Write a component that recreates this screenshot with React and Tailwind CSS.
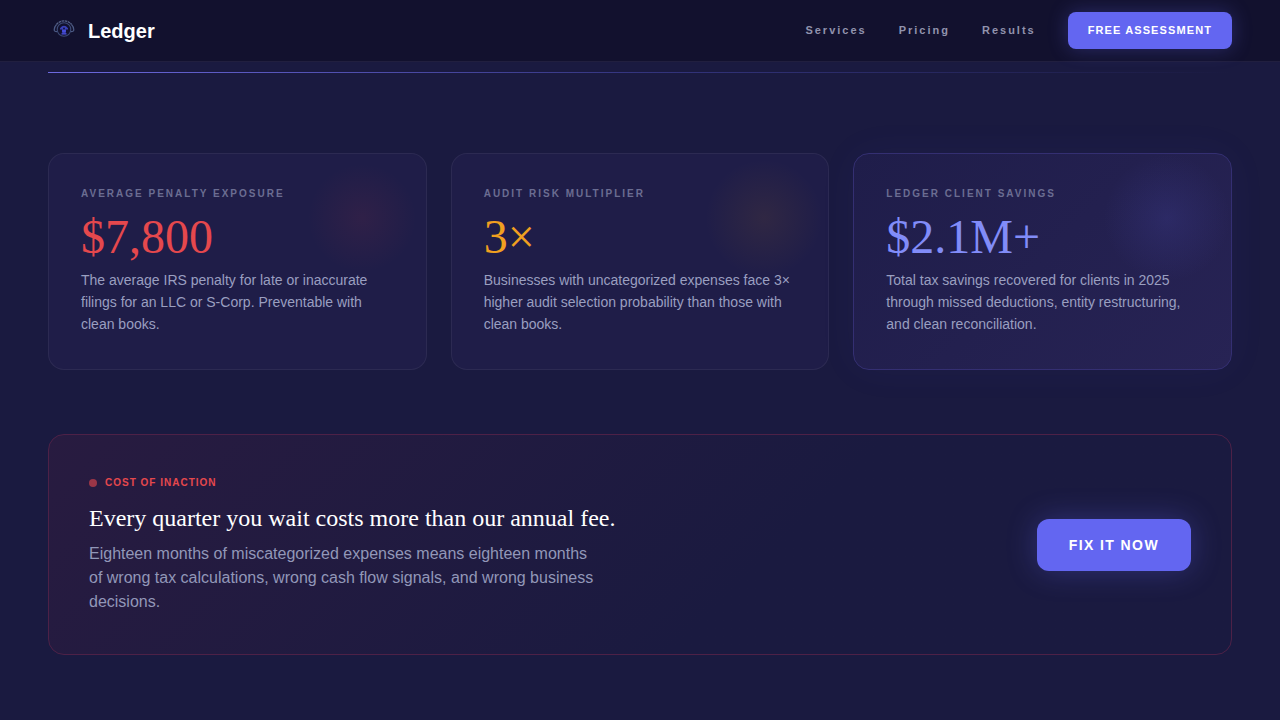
import React from 'react';

const links = ['Services', 'Pricing', 'Results'];

const stats = [
  {
    label: 'Average Penalty Exposure',
    value: '$7,800',
    text: 'The average IRS penalty for late or inaccurate filings for an LLC or S-Corp. Preventable with clean books.',
    color: 'text-[#e5484d]',
    glow: 'bg-[radial-gradient(circle,rgba(239,68,68,0.08),transparent_60%)]',
    card: 'border-white/6 bg-[#1f1d48]',
  },
  {
    label: 'Audit Risk Multiplier',
    value: '3×',
    text: 'Businesses with uncategorized expenses face 3× higher audit selection probability than those with clean books.',
    color: 'text-[#f0a020]',
    glow: 'bg-[radial-gradient(circle,rgba(245,158,11,0.08),transparent_65%)]',
    card: 'border-white/6 bg-[#1f1d48]',
  },
  {
    label: 'Ledger Client Savings',
    value: '$2.1M+',
    text: 'Total tax savings recovered for clients in 2025 through missed deductions, entity restructuring, and clean reconciliation.',
    color: 'text-[#818cf8]',
    glow: 'bg-[radial-gradient(circle,rgba(99,102,241,0.13),transparent_70%)]',
    card: 'border-[#342f72] bg-linear-135 from-[#1f1d4a] to-[#272354] shadow-[0_0_40px_rgba(99,102,241,0.05)]',
  },
];

const Logo = () => (
  <svg viewBox="0 0 32 32" className="w-8 h-8" fill="none" aria-hidden="true">
    <path d="M8.500 9.500a9.500 9.500 0 0 1 15 0" stroke="#56638a" strokeWidth="1.300" strokeDasharray="2.500 0.600" />
    <path d="M8.500 9.500C7 11 6.200 13 6.200 15c0 1.200 1.300 1.700 3 1.500M23.500 9.500c1.500 1.500 2.300 3.500 2.300 5.500 0 1.200-1.300 1.700-3 1.500" stroke="#4c5a84" strokeWidth="1.200" />
    <circle cx="16" cy="14.500" r="6.800" stroke="#3d4b76" strokeWidth="1.100" />
    <path d="M12 13.200q4-4.800 8 0v1.300h-2.200v4h-3.600v-4H12z" fill="#3a41b8" />
    <path d="M14 16h4M13.500 18.800h5" stroke="#4c52e4" strokeWidth="1.300" />
    <circle cx="16" cy="13.500" r="0.900" fill="#12112e" />
  </svg>
);

const Navbar = () => (
  <header className="flex items-center justify-between px-12 py-3 bg-[#12112e] border-b border-[#211f3f]">
    <a href="#" className="flex items-center gap-2 text-xl leading-7 font-bold text-white">
      <Logo />
      Ledger
    </a>
    <nav className="flex items-center gap-8 text-[11px] leading-[17px] font-bold">
      {links.map((link) => (
        <a key={link} href={`#${link.toLowerCase()}`} className="tracking-[2px] text-[#9193ad]">
          {link}
        </a>
      ))}
      <button className="px-5 py-[10px] rounded-lg bg-[#6366f1] text-white uppercase tracking-widest shadow-[0_0_20px_rgba(99,102,241,0.3)]">
        Free Assessment
      </button>
    </nav>
  </header>
);

const StatCard = ({ stat }) => (
  <div className={`relative overflow-hidden rounded-2xl border px-8 pt-8 pb-[34px] ${stat.card}`}>
    <div className={`absolute top-0 right-0 w-32 h-32 ${stat.glow}`} />
    <p className="mb-3 text-[10px] leading-[15px] font-bold uppercase tracking-[2px] text-[#6b6d92]">{stat.label}</p>
    <p className={`mb-2 font-['Liberation_Serif',serif] text-5xl leading-[48px] ${stat.color}`}>{stat.value}</p>
    <p className="text-sm leading-[22px] text-[#9a9fc0]">{stat.text}</p>
  </div>
);

const App = () => {
  return (
    <div className="min-h-screen bg-[#1a1a40] font-['Liberation_Sans',sans-serif]">
      <Navbar />
      <main className="px-12 pt-[10px] pb-16">
        <div className="h-px mb-20 bg-[linear-gradient(to_right,#6d6ae0,rgba(99,102,241,0.35)_50%,transparent)]" />

        <section className="grid grid-cols-3 gap-6 mb-16">
          {stats.map((stat) => (
            <StatCard key={stat.label} stat={stat} />
          ))}
        </section>

        <section className="flex items-center justify-between gap-8 rounded-2xl border border-[#4d2147] bg-linear-135 from-[#281b40] to-[#1a1a40] to-60% p-10">
          <div>
            <div className="flex items-center gap-2 mb-3">
              <span className="w-2 h-2 rounded-full bg-[#9b3647]" />
              <span className="text-[10px] leading-[15px] font-bold uppercase tracking-[1px] text-[#e5484d]">Cost of Inaction</span>
            </div>
            <h2 className="mb-2 font-['Liberation_Serif',serif] text-2xl leading-8 text-white">
              Every quarter you wait costs more than our annual fee.
            </h2>
            <p className="max-w-lg text-base leading-6 text-[#9297b8]">
              Eighteen months of miscategorized expenses means eighteen months of wrong tax calculations, wrong cash flow
              signals, and wrong business decisions.
            </p>
          </div>
          <button className="shrink-0 px-8 py-4 rounded-xl bg-[#6366f1] text-sm leading-5 font-bold uppercase tracking-widest text-white shadow-[0_0_30px_rgba(99,102,241,0.3)]">
            Fix It Now
          </button>
        </section>
      </main>
    </div>
  );
};

export default App;
